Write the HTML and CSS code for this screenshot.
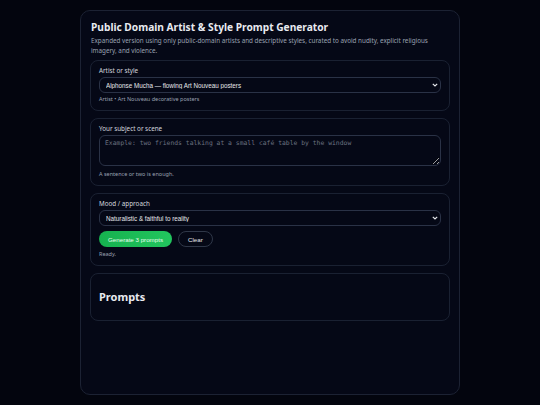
FILE: index.html
```html
<!DOCTYPE html>
<html lang="en">
<head>
  <meta charset="UTF-8">
  <title>Public Domain Artist &amp; Style Prompt Generator</title>
  <link rel="stylesheet" href="styles.css">
</head>
<body>
  <div class="app">
    <h1>Public Domain Artist &amp; Style Prompt Generator</h1>
    <p class="sub">Expanded version using only public-domain artists and descriptive styles, curated to avoid nudity, explicit religious imagery, and violence.</p>

    <div class="section">
      <label for="artist">Artist or style</label>
      <div class="select-wrap">
        <select id="artist">
          <option>Alphonse Mucha — flowing Art Nouveau posters</option>
        </select>
        <svg class="chev" width="6" height="4" viewBox="0 0 6 4"><path d="M0.8 0.8 L3 3 L5.2 0.8" fill="none" stroke="#e5e7eb" stroke-width="1.2"/></svg>
      </div>
      <div class="hint">Artist • Art Nouveau decorative posters</div>
    </div>

    <div class="section">
      <label for="subject">Your subject or scene</label>
      <textarea id="subject" rows="3" placeholder="Example: two friends talking at a small café table by the window"></textarea>
      <div class="hint">A sentence or two is enough.</div>
    </div>

    <div class="section">
      <label for="mood">Mood / approach</label>
      <div class="select-wrap">
        <select id="mood">
          <option>Naturalistic &amp; faithful to reality</option>
        </select>
        <svg class="chev" width="6" height="4" viewBox="0 0 6 4"><path d="M0.8 0.8 L3 3 L5.2 0.8" fill="none" stroke="#e5e7eb" stroke-width="1.2"/></svg>
      </div>
      <div class="actions">
        <button class="primary">Generate 3 prompts</button>
        <button class="ghost">Clear</button>
      </div>
      <div class="hint status">Ready.</div>
    </div>

    <div class="section">
      <h2>Prompts</h2>
      <div id="prompts"></div>
    </div>
  </div>
</body>
</html>
```

FILE: styles.css
```css
* { box-sizing: border-box; }
html { color-scheme: dark; }
body { margin: 0; padding: 10px 80px; background: #03050e; font-family: "Noto Sans", sans-serif; color: #e5e7eb; }
.app { min-height: 385px; background: #050816; border: 1px solid #1c2233; border-radius: 10px; padding: 8px 9px; }
h1 { font-size: 10.2px; line-height: 16px; margin: 0 0 1px 1px; font-weight: 700; color: #e8eaf0; }
.sub { font-size: 6.3px; line-height: 10px; margin: 0 0 4px 1px; color: #9aa1b1; }
.section { border: 1px solid #1a2132; border-radius: 8px; padding: 5px 8px 6px; margin-bottom: 7px; }
label { display: block; font-size: 6.3px; line-height: 10px; margin-bottom: 1px; color: #d4d7de; }
.select-wrap { position: relative; }
select { display: block; width: 100%; height: 16px; appearance: none; font-family: "Liberation Sans", Arial, sans-serif; font-size: 6.3px; color: #e5e7eb; background: #050816; border: 1px solid #2a3246; border-radius: 6px; padding: 0 6px; }
.chev { position: absolute; right: 3px; top: 6px; pointer-events: none; }
textarea { display: block; width: 100%; height: 31px; margin-top: 1px; font-family: "DejaVu Sans Mono", monospace; font-size: 6.4px; color: #e5e7eb; background: #050816; border: 1px solid #2a3246; border-radius: 6px; padding: 3px 5px; resize: vertical; }
textarea::placeholder { color: #6b7280; }
.hint { font-size: 5.5px; line-height: 10px; margin-top: 1px; color: #9aa1b1; }
textarea + .hint { margin-top: 3px; }
.status { margin-top: 2px; }
.actions { display: flex; gap: 6px; margin-top: 5px; }
button { height: 16px; font-family: "Liberation Sans", Arial, sans-serif; font-size: 6.2px; border-radius: 8px; padding: 0 8px; cursor: pointer; }
.primary { background: linear-gradient(90deg, #16b24f, #22c55e); color: #eafff0; border: none; padding: 0 9px; }
.ghost { background: transparent; color: #e5e7eb; border: 1px solid #2f3748; padding: 0 9px; }
h2 { font-size: 11px; line-height: 14px; margin: 11px 0 10px; font-weight: 700; color: #e8eaf0; }
```
